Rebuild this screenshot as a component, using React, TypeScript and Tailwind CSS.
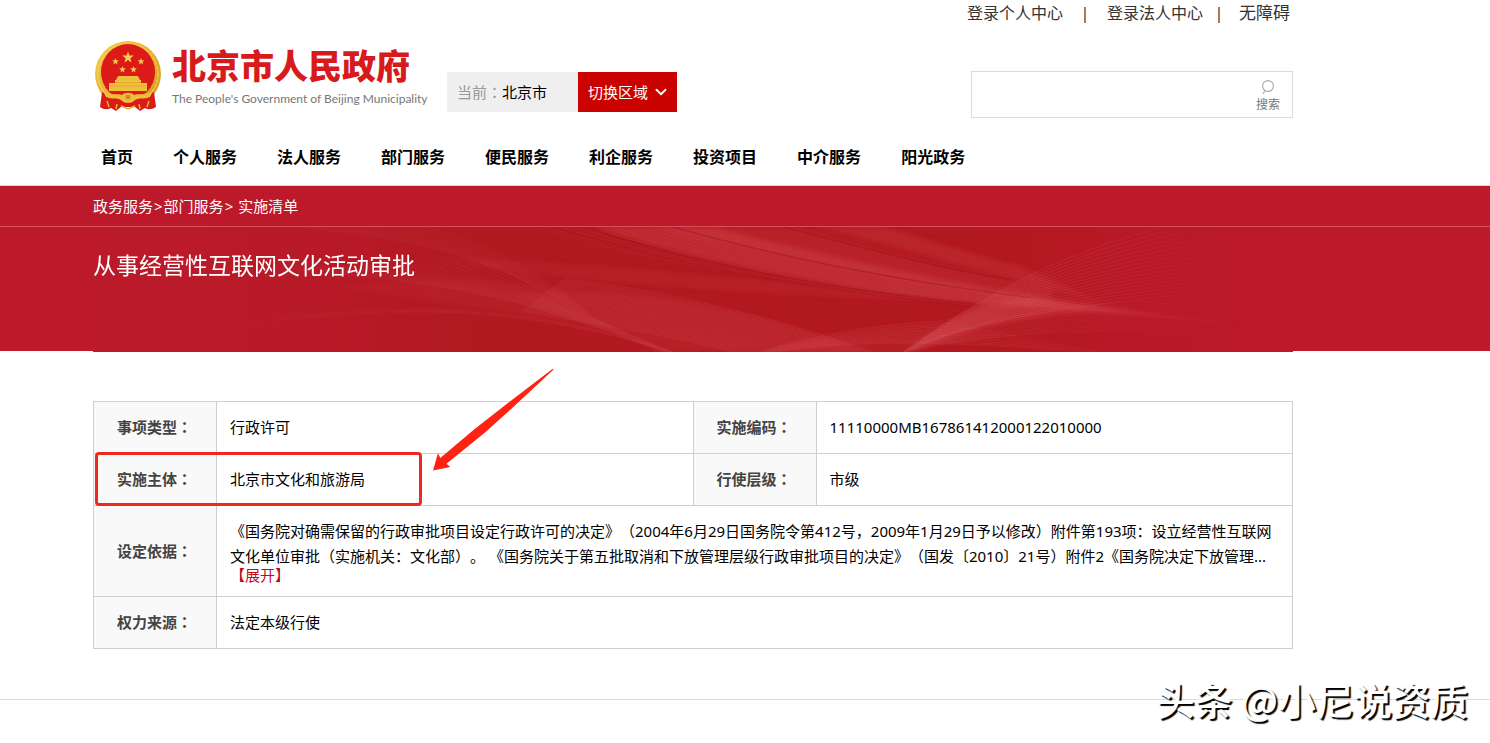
import { ChevronDown } from "lucide-react";

const NAV_ITEMS = ["首页", "个人服务", "法人服务", "部门服务", "便民服务", "利企服务", "投资项目", "中介服务", "阳光政务"];

// each curve is a cubic bezier: x0 y0 x1 y1 x2 y2 x3 y3
const FANS = [
  { from: [200, 0, 300, 10, 380, 22, 467, 73], to: [330, 0, 370, 8, 430, 30, 500, 90], count: 12, opacity: 0.07 },
  { from: [400, 36, 440, 60, 500, 95, 579, 125], to: [140, 40, 330, 50, 430, 68, 570, 125], count: 22, opacity: 0.07 },
  { from: [140, 98, 300, 70, 420, 82, 560, 118], to: [320, 81, 440, 84, 500, 100, 579, 125], count: 10, opacity: 0.06 },
  { from: [470, 52, 570, 62, 670, 88, 780, 125], to: [430, 84, 520, 100, 580, 110, 640, 125], count: 24, opacity: 0.09 },
  { from: [668, 125, 720, 108, 780, 98, 850, 94], to: [680, 125, 800, 108, 900, 120, 1010, 125], count: 14, opacity: 0.07 },
  { from: [811, 125, 880, 75, 960, 28, 1070, 0], to: [811, 125, 870, 98, 960, 76, 1180, 60], count: 18, opacity: 0.12 },
  { from: [811, 125, 870, 95, 960, 70, 1180, 72], to: [811, 125, 900, 105, 1000, 100, 1180, 108], count: 12, opacity: 0.07 },
  { from: [440, 0, 640, 60, 860, 70, 1180, 100], to: [560, 0, 720, 48, 880, 62, 1180, 104], count: 10, opacity: 0.05 },
];

function fanPaths(from: number[], to: number[], count: number) {
  return Array.from({ length: count }, (_, i) => {
    const t = i / (count - 1);
    const p = from.map((v, k) => (v + (to[k] - v) * t).toFixed(1));
    return `M${p[0]} ${p[1]}C${p[2]} ${p[3]} ${p[4]} ${p[5]} ${p[6]} ${p[7]}`;
  });
}

function BannerWaves() {
  return (
    <svg viewBox="0 0 1200 125" preserveAspectRatio="none" className="absolute inset-0 w-full h-full" aria-hidden="true">
      <defs>
        <linearGradient id="base" x1="0" x2="1" y1="0" y2="0">
          <stop offset="0" stopColor="#bc1a2b" />
          <stop offset=".18" stopColor="#b81a27" />
          <stop offset=".34" stopColor="#b11920" />
          <stop offset=".76" stopColor="#b3181f" />
          <stop offset=".9" stopColor="#ba1929" />
          <stop offset="1" stopColor="#bc1a2b" />
        </linearGradient>
        <linearGradient id="fade" x1="0" x2="1" y1="0" y2="0">
          <stop offset="0" stopColor="#fff" stopOpacity="0" />
          <stop offset=".3" stopColor="#fff" stopOpacity=".7" />
          <stop offset=".45" stopColor="#fff" />
          <stop offset=".78" stopColor="#fff" />
          <stop offset=".96" stopColor="#fff" stopOpacity="0" />
        </linearGradient>
        <mask id="edges">
          <rect width="1200" height="125" fill="url(#fade)" />
        </mask>
        <filter id="soft">
          <feGaussianBlur stdDeviation="2" />
        </filter>
      </defs>
      <rect width="1200" height="125" fill="url(#base)" />
      <g mask="url(#edges)">
        <g fill="#e8606a" filter="url(#soft)">
          <path d="M500 0C600 34 760 64 890 78L1170 98L1100 90C960 76 780 42 620 0Z" opacity=".24" />
          <path d="M560 0C700 34 830 60 960 76L960 60C860 45 780 20 700 0Z" opacity=".13" />
          <path d="M720 0C800 18 860 38 930 54L1010 76L930 40C860 22 830 10 790 0Z" opacity=".16" />
          <path d="M240 60C400 84 470 90 540 112L579 125C520 100 480 84 440 60C400 50 320 50 240 60Z" opacity=".1" />
          <path d="M410 66C560 56 680 90 780 125L570 125C530 110 500 90 410 66Z" opacity=".1" />
          <path d="M320 30C560 36 700 60 900 74C740 72 520 62 320 30Z" opacity=".1" />
          <path d="M811 125C850 92 880 80 930 70L1050 84C950 84 890 96 820 125Z" opacity=".24" />
          <path d="M668 125C720 108 780 98 850 94L811 125Z" opacity=".08" />
        </g>
        <g fill="none" stroke="#8f0f18" strokeWidth="1.5" opacity=".35">
          <path d="M494 0C600 38 740 62 887 78" />
          <path d="M580 0C700 34 820 56 940 71" />
          <path d="M690 0C790 26 850 42 920 53" />
          <path d="M460 0C600 44 740 64 880 80" opacity=".5" />
        </g>
        {FANS.map((fan, i) => (
          <g key={i} fill="none" stroke="#f08a90" strokeWidth="1" opacity={fan.opacity * 1.4}>
            {fanPaths(fan.from, fan.to, fan.count).map((d) => (
              <path key={d} d={d} />
            ))}
          </g>
        ))}
      </g>
    </svg>
  );
}

function Star({ x, y, r }: { x: number; y: number; r: number }) {
  const points = Array.from({ length: 10 }, (_, i) => {
    const radius = i % 2 ? r * 0.42 : r;
    const angle = (Math.PI / 5) * i - Math.PI / 2;
    return `${(x + radius * Math.cos(angle)).toFixed(1)},${(y + radius * Math.sin(angle)).toFixed(1)}`;
  }).join(" ");
  return <polygon points={points} fill="#f6cf4e" />;
}

function Emblem() {
  return (
    <svg viewBox="3 5 68 71" className="w-[68px] h-[71px] shrink-0" aria-hidden="true">
      <defs>
        <linearGradient id="gold" x1="0" x2="1" y1="0" y2="1">
          <stop offset="0" stopColor="#f3cf55" />
          <stop offset=".5" stopColor="#e8b32d" />
          <stop offset="1" stopColor="#d7971c" />
        </linearGradient>
      </defs>
      <ellipse cx="38" cy="38" rx="33" ry="33" fill="url(#gold)" />
      <ellipse cx="38" cy="38" rx="30" ry="30" fill="none" stroke="#f3d468" strokeWidth="1.5" strokeDasharray="4 1" opacity=".7" />
      <ellipse cx="38" cy="36" rx="27" ry="28" fill="#dc1a17" />
      <Star x={38} y={21.5} r={6} />
      <Star x={25.5} y={25.5} r={3.6} />
      <Star x={51} y={25.5} r={3.6} />
      <Star x={32.5} y={33.5} r={3.6} />
      <Star x={43.5} y={33.5} r={3.6} />
      <path d="M28 40h20l2 4H26zM25 44h26v3H25zM19 47h38v8H19z" fill="#f0bf3c" />
      <path d="M20 50h36M25 46.5h26" stroke="#dca02a" strokeWidth=".6" />
      <path d="M12 56C24 63 52 63 64 56L66 71Q60 75 55 72L50 75L45 71H31L26 75L21 72Q15 75 10 71Z" fill="#da1c17" />
      <path d="M13 55C22 60 28 57 32 59C35 56 41 56 44 59C48 57 54 60 63 55L60 61C54 64 49 61 45 64C42 68 34 68 31 64C27 61 22 64 16 61Z" fill="#efbe3b" />
      <circle cx="38" cy="61" r="2.5" fill="#cf8a2b" />
      <path d="M17 65l2 6M27 68l-1 5M49 68l1 5M59 65l-2 6M31 70l7 3l7-3" fill="none" stroke="#eab233" strokeWidth="1.5" />
    </svg>
  );
}

function SearchIcon() {
  return (
    <svg viewBox="0 0 14 16" className="w-[14px] h-4" fill="none" stroke="#a8a8a8" strokeWidth="1.1" aria-hidden="true">
      <circle cx="7" cy="7" r="5.4" />
      <path d="M4 11.5L2 14.8" />
    </svg>
  );
}

function Label({ text }: { text: string }) {
  return (
    <th scope="row" className="border border-[#cfcfcf] bg-[#f9f9f9] px-[23px] text-left font-bold text-[#444] whitespace-nowrap">
      {text}
      <span className="font-['Noto_Sans_CJK_TC',sans-serif]">：</span>
    </th>
  );
}

const CELL = "border border-[#cfcfcf] px-[13px]";

export default function App() {
  return (
    <div className="min-h-screen bg-white font-['Noto_Sans','Noto_Sans_CJK_SC',sans-serif] text-[15px] text-black [text-spacing-trim:space-all]">
      <header className="ml-[93px] mr-4 max-w-[1200px]">
        <div className="flex justify-end items-center h-[26px] pr-[3px] text-base text-[#333]">
          <a href="#personal">登录个人中心</a>
          <span className="w-11 text-center">|</span>
          <a href="#corporate">登录法人中心</a>
          <span className="w-9 pr-1 text-center">|</span>
          <a href="#accessible" className="text-[17px]">无障碍</a>
        </div>

        <div className="flex items-start pt-[15px]">
          <a href="#home" className="flex w-[354px]">
            <Emblem />
            <span className="flex flex-col pl-[11px] pt-[6px] whitespace-nowrap">
              <span className="text-[34px] leading-9 font-black text-[#d71a1b] font-['Noto_Sans_CJK_SC',sans-serif]">北京市人民政府</span>
              <span className="mt-[6px] text-xs leading-5 text-[#777] font-['Lato',sans-serif]">The People's Government of Beijing Municipality</span>
            </span>
          </a>
          <div className="mt-[31px] flex h-10">
            <div className="w-[131px] bg-[#efefef] pl-[10px] leading-10">
              <span className="text-[#999]">当前<span className="font-['Noto_Sans_CJK_TC',sans-serif]">：</span></span>北京市
            </div>
            <button type="button" className="flex w-[99px] items-center gap-1 bg-[#cb0300] pl-[10px] text-white">
              切换区域
              <ChevronDown size={18} strokeWidth={2.5} />
            </button>
          </div>
          <form className="ml-auto mt-[30px] flex h-[47px] w-[322px] border border-[#dcdcdc]">
            <input type="text" aria-label="搜索" className="min-w-0 flex-1 px-3 outline-none" />
            <button type="button" className="flex w-12 flex-col items-center pt-[7px] text-xs text-[#777]">
              <SearchIcon />
              <span className="leading-5">搜索</span>
            </button>
          </form>
        </div>

        <nav className="flex h-[67px] items-center gap-10 pl-2 pt-[10px] text-base font-bold">
          {NAV_ITEMS.map((item) => (
            <a key={item} href="#nav">{item}</a>
          ))}
        </nav>
      </header>

      <section className="h-[166px] border-t border-[#d8d8d8] bg-[#bc1a2b] text-white">
        <div className="h-[41px] border-b border-[#d94f5c]">
          <p className="ml-[93px] leading-10">
            <a href="#gov">政务服务</a>
            <span className="mx-px">&gt;</span>
            <a href="#dept">部门服务</a>
            <span className="mx-px">&gt;</span> <a href="#list">实施清单</a>
          </p>
        </div>
        <div className="relative ml-[93px] mr-4 h-[125px] max-w-[1200px]">
          <BannerWaves />
          <h1 className="relative pt-5 text-[23px] leading-9">从事经营性互联网文化活动审批</h1>
        </div>
      </section>

      <main className="relative ml-[93px] mr-4 mt-[50px] max-w-[1200px]">
        <table className="w-full table-fixed border-collapse">
          <colgroup>
            <col className="w-[123px]" />
            <col />
            <col className="w-[123px]" />
            <col />
          </colgroup>
          <tbody>
            <tr className="h-[52px]">
              <Label text="事项类型" />
              <td className={CELL}>行政许可</td>
              <Label text="实施编码" />
              <td className={CELL}>11110000MB167861412000122010000</td>
            </tr>
            <tr className="h-[52px]">
              <Label text="实施主体" />
              <td className={CELL}>北京市文化和旅游局</td>
              <Label text="行使层级" />
              <td className={CELL}>市级</td>
            </tr>
            <tr className="h-[91px]">
              <Label text="设定依据" />
              <td colSpan={3} className={`${CELL} pb-[2px]`}>
                <p className="leading-[25px]">
                  《国务院对确需保留的行政审批项目设定行政许可的决定》（2004年6月29日国务院令第412号，2009年1月29日予以修改）附件第193项：设立经营性互联网文化单位审批（实施机关：文化部）。 《国务院关于第五批取消和下放管理层级行政审批项目的决定》（国发〔2010〕21号）附件2《国务院决定下放管理...
                </p>
                <button type="button" className="block leading-3 text-[#c20a1a]">【展开】</button>
              </td>
            </tr>
            <tr className="h-[52px]">
              <Label text="权力来源" />
              <td colSpan={3} className={CELL}>法定本级行使</td>
            </tr>
          </tbody>
        </table>
        <div className="absolute left-[2px] top-[51px] h-[54px] w-[327px] rounded-[4px] border-[3px] border-[#ee2a20]" />
        <svg viewBox="432 368 122 104" className="absolute left-[339px] -top-[33px] h-[104px] w-[122px]" aria-hidden="true">
          <path d="M433 470.5L438 453L440.3 458L475 428.7L508.3 402.7L552.8 368.7L553.6 369.4L513.3 407L485 432.5L446.5 463.8L450.3 467Z" fill="#ff2212" />
        </svg>
      </main>

      <footer className="relative mt-[50px] border-t border-[#dcdcdc]">
        <p className="absolute right-[22px] -top-[28px] text-[38px] leading-[54px] font-medium whitespace-nowrap text-white font-['Noto_Sans_CJK_SC',sans-serif] [text-shadow:2px_2px_1px_#000]">
          头条 @小尼说资质
        </p>
      </footer>
    </div>
  );
}
